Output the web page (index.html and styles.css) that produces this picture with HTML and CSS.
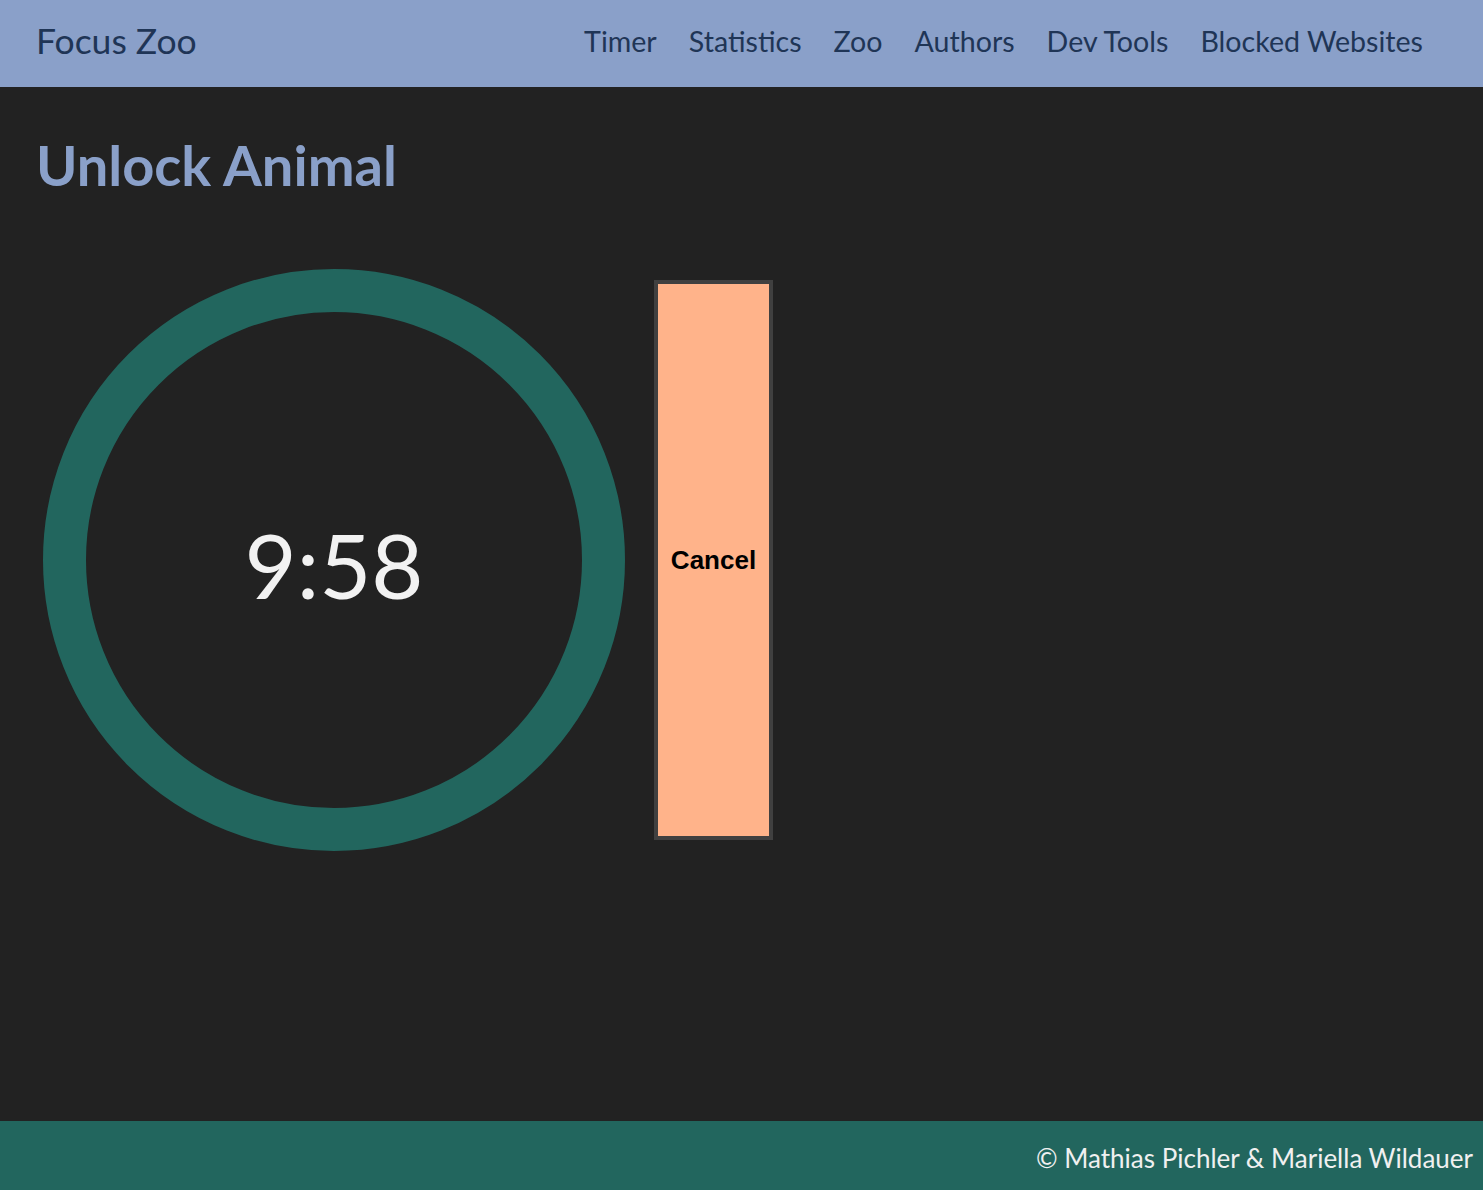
FILE: index.html
```html
<!DOCTYPE html>
<html lang="en">
<head>
<meta charset="utf-8">
<title>Focus Zoo</title>
<link rel="stylesheet" href="styles.css">
</head>
<body>
<header class="topbar">
  <a class="brand" href="#">Focus Zoo</a>
  <nav class="nav">
    <a href="#">Timer</a>
    <a href="#">Statistics</a>
    <a href="#">Zoo</a>
    <a href="#">Authors</a>
    <a href="#">Dev Tools</a>
    <a href="#">Blocked Websites</a>
  </nav>
</header>
<main class="content">
  <h1 class="title">Unlock Animal</h1>
  <div class="timer-row">
    <div class="timer">
      <svg class="ring" width="600" height="600" viewBox="0 0 600 600">
        <circle cx="300" cy="300" r="269.5" fill="none" stroke="#22665e" stroke-width="43"/>
      </svg>
      <span class="time">9:58</span>
    </div>
    <button class="cancel">Cancel</button>
  </div>
</main>
<footer class="footer">© Mathias Pichler &amp; Mariella Wildauer</footer>
</body>
</html>
```
FILE: styles.css
```css
* { box-sizing: border-box; }
html, body { margin: 0; padding: 0; }
body {
  background: #222222;
  font-family: Lato, "Open Sans", sans-serif;
  min-height: 100vh;
  display: flex;
  flex-direction: column;
}
.topbar {
  height: 87px;
  background: #8aa0c9;
  display: flex;
  align-items: center;
  justify-content: space-between;
  padding: 0 60px 6px 36px;
}
.topbar a { color: #1f3556; text-decoration: none; }
.brand { font-size: 35.5px; }
.nav { display: flex; gap: 32px; font-size: 28.6px; }
.content {
  flex: 1;
  padding: 0 36px;
}
.title {
  margin: 0;
  padding-top: 43px;
  font-size: 56px;
  font-weight: bold;
  color: #8aa0c9;
  line-height: 70px;
}
.timer-row {
  display: flex;
  align-items: center;
  gap: 20px;
  margin-top: 60px;
  margin-left: -2px;
}
.timer {
  position: relative;
  width: 600px;
  height: 600px;
}
.ring { display: block; }
.time {
  position: absolute;
  inset: 0;
  display: flex;
  align-items: center;
  justify-content: center;
  color: #f2f2f2;
  font-size: 90px;
  font-weight: 400;
  padding-top: 8px;
}
.cancel {
  width: 119px;
  height: 560px;
  background: #ffb38a;
  border: 4px solid #404040;
  font-family: "Liberation Sans", Arial, sans-serif;
  font-weight: bold;
  font-size: 26px;
  color: #000;
  padding: 0;
}
.footer {
  height: 69px;
  background: #22665e;
  color: #f0f0f0;
  font-size: 26px;
  display: flex;
  align-items: center;
  justify-content: flex-end;
  padding: 5px 10px 0;
}
```
